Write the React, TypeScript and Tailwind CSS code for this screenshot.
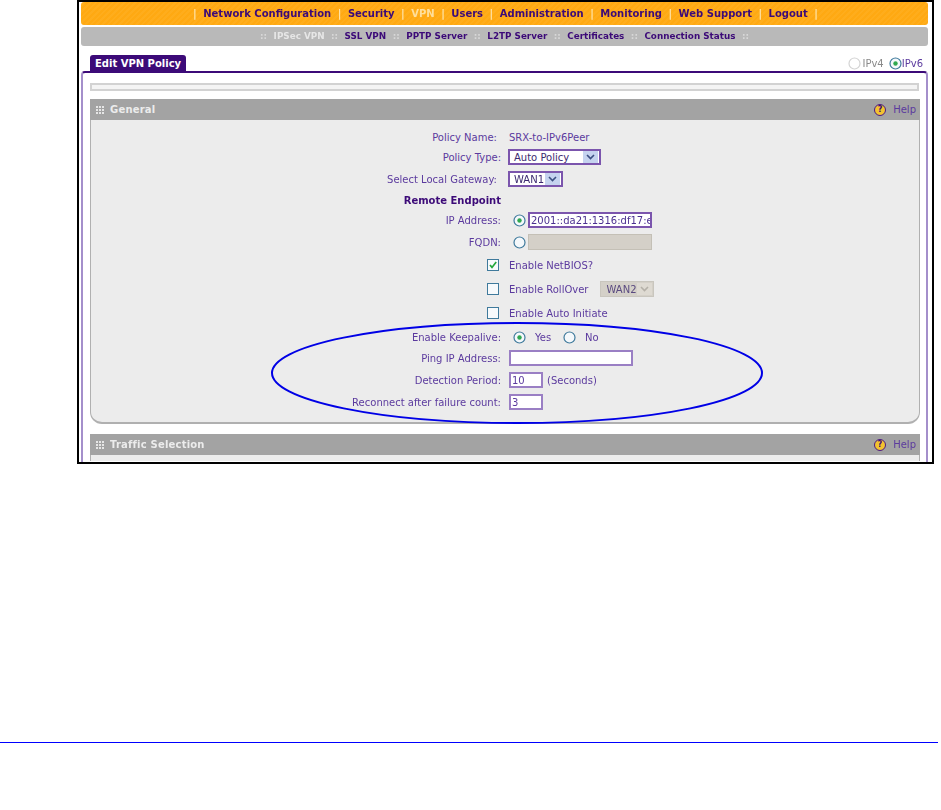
const font = '[font-family:"DejaVu_Sans",sans-serif]'

const mainNav = [
  'Network Configuration',
  'Security',
  'VPN',
  'Users',
  'Administration',
  'Monitoring',
  'Web Support',
  'Logout',
]

const subNav = ['IPSec VPN', 'SSL VPN', 'PPTP Server', 'L2TP Server', 'Certificates', 'Connection Status']

function Radio({ on = false, faded = false }: { on?: boolean; faded?: boolean }) {
  return (
    <svg width="13" height="13" viewBox="0 0 13 13" className="shrink-0">
      <circle cx="6.5" cy="6.5" r="5.5" fill={faded ? '#fff' : '#f4f8fb'} stroke={faded ? '#d4d4d4' : '#3f7a9c'} strokeWidth="1.2" />
      {on && <circle cx="6.5" cy="6.5" r="2.2" fill="#2fa84f" />}
    </svg>
  )
}

function Check({ on = false }: { on?: boolean }) {
  return (
    <svg width="12" height="12" viewBox="0 0 12 12" className="shrink-0">
      <rect x="0.5" y="0.5" width="11" height="11" fill="#f7fafc" stroke="#3f7a9c" />
      {on && <path d="M3 6l2 2.4L9.2 3" fill="none" stroke="#22a63a" strokeWidth="1.7" />}
    </svg>
  )
}

function Caret({ off = false }: { off?: boolean }) {
  return (
    <span className={`flex w-[15px] h-[12px] items-center justify-center ${off ? 'bg-[#dedad2]' : 'bg-[#c5d3ef]'}`}>
      <svg width="9" height="6" viewBox="0 0 9 6">
        <path d="M1 1l3.5 3.5L8 1" fill="none" stroke={off ? '#b4b0a8' : '#3b4f82'} strokeWidth="1.6" />
      </svg>
    </span>
  )
}

function Help() {
  return (
    <div className="flex items-center gap-[7px]">
      <span className="flex w-[12px] h-[12px] items-center justify-center rounded-full bg-[#f2c230] border border-[#4a1a86] text-[8px] font-bold leading-none text-[#3c0a78]">
        ?
      </span>
      <span className="text-[10px] text-[#5b3a9e]">Help</span>
    </div>
  )
}

function SectionHead({ title }: { title: string }) {
  return (
    <div className="flex h-[21px] items-center justify-between bg-[#a3a3a3] pl-[6px] pr-[4px]">
      <div className="flex items-center gap-[6px]">
        <span className="grid grid-cols-3 gap-[1px]">
          {Array.from({ length: 9 }).map((_, i) => (
            <span key={i} className="w-[2px] h-[2px] bg-[#e6e6e6]" />
          ))}
        </span>
        <span className="text-[10px] font-bold tracking-[0.2px] text-[#ececec]">{title}</span>
      </div>
      <Help />
    </div>
  )
}

function Row({ h, label, shift, bold, children }: { h: string; label?: React.ReactNode; shift?: boolean; bold?: boolean; children?: React.ReactNode }) {
  return (
    <div className={`flex items-center ${h}`}>
      <div className={`w-[410px] shrink-0 text-right whitespace-nowrap ${shift ? 'pr-[4px]' : ''} ${bold ? 'font-bold text-[#3c0a78]' : ''}`}>
        {label}
      </div>
      <div className="flex items-center pl-[7px]">{children}</div>
    </div>
  )
}

function CheckRow({ h, on, text, children }: { h: string; on?: boolean; text: string; children?: React.ReactNode }) {
  return (
    <div className={`flex items-center ${h}`}>
      <div className="flex w-[408px] shrink-0 justify-end">
        <Check on={on} />
      </div>
      <div className="flex items-center pl-[10px] whitespace-nowrap">
        {text}
        {children}
      </div>
    </div>
  )
}

export default function App() {
  return (
    <div className={`relative min-h-[810px] w-[941px] bg-white text-[10px] text-[#5b3a9e] ${font}`}>
      <div className="ml-[77px] flex h-[464px] w-[857px] flex-col overflow-hidden border-2 border-black pl-[2px] pr-[4px]">
        <nav className="flex h-[23px] shrink-0 items-center justify-center gap-[6.5px] rounded-[3px] bg-[repeating-linear-gradient(135deg,#ffa912,#ffa912_2px,#ffad1c_2px,#ffad1c_4px)] pl-[2px] text-[10px] font-bold text-[#3c0a78] blur-[0.3px]">
          <span className="text-[#ffe3a8]">|</span>
          {mainNav.map((item) => (
            <div key={item} className="flex items-center gap-[6.5px]">
              <span className={item === 'VPN' ? 'text-[#ffdf9c]' : ''}>{item}</span>
              <span className="text-[#ffe3a8]">|</span>
            </div>
          ))}
        </nav>

        <nav className="mt-[2px] flex h-[19px] shrink-0 items-center justify-center gap-[6.5px] rounded-[3px] bg-[#b9b9b9] text-[8.8px] font-bold text-[#3c0a78] blur-[0.3px]">
          <span className="text-[#d8d8d8]">::</span>
          {subNav.map((item) => (
            <div key={item} className="flex items-center gap-[6.5px]">
              <span className={item === 'IPSec VPN' ? 'text-[#e6e6e6]' : ''}>{item}</span>
              <span className="text-[#d8d8d8]">::</span>
            </div>
          ))}
        </nav>

        <div className="mt-[9px] flex h-[16px] shrink-0 items-end justify-between pl-[9px] pr-[5px] blur-[0.3px]">
          <div className="flex h-[16px] w-[96px] items-center rounded-t-[3px] bg-[#3c0a78] pl-[5px] text-[10px] font-bold text-white">
            Edit VPN Policy
          </div>
          <div className="flex h-[16px] items-center text-[10px]">
            <Radio faded />
            <span className="ml-[1px] mr-[5px] text-[#8a8a8a]">IPv4</span>
            <Radio on />
            <span>IPv6</span>
          </div>
        </div>

        <div className="flex min-h-0 flex-1 flex-col rounded-t-[4px] border-x-2 border-t-2 border-x-[#a48fcb] border-t-[#3c0a78] pl-[7px] pr-[6px] pt-[10px] blur-[0.3px]">
          <div className="mr-[1px] h-[8px] shrink-0 border-2 border-[#d2d2d2] bg-[#f4f4f4]" />

          <div className="mt-[8px] shrink-0">
            <SectionHead title="General" />
            <div className="h-[304px] rounded-b-[12px] border-x border-b-2 border-[#b0b0b0] bg-[#ececec] pt-[7px]">
              <Row h="h-[20px]" label="Policy Name:" shift>
                <span className="pl-[1px]">SRX-to-IPv6Peer</span>
              </Row>
              <Row h="h-[20px]" label="Policy Type:">
                <div className="flex h-[16px] w-[93px] items-center justify-between border-2 border-[#7b55ad] bg-white pl-[4px] pr-[1px] text-[#3c2a70]">
                  Auto Policy
                  <Caret />
                </div>
              </Row>
              <Row h="h-[24px]" label="Select Local Gateway:" shift>
                <div className="flex h-[16px] w-[55px] items-center justify-between border-2 border-[#7b55ad] bg-white pl-[4px] pr-[1px] text-[#3c2a70]">
                  WAN1
                  <Caret />
                </div>
              </Row>
              <Row h="h-[18px]" label="Remote Endpoint" bold />
              <Row h="h-[22px]" label="IP Address:">
                <div className="ml-[5px] flex items-center gap-[2px]">
                  <Radio on />
                  <div className="flex h-[16px] w-[124px] items-center overflow-hidden whitespace-nowrap border-2 border-[#7b55ad] bg-white pl-[1px] text-[#4a2f90]">
                    2001::da21:1316:df17:e
                  </div>
                </div>
              </Row>
              <Row h="h-[22px]" label="FQDN:">
                <div className="ml-[5px] flex items-center gap-[2px]">
                  <Radio />
                  <div className="h-[16px] w-[124px] border border-[#c4c0b6] bg-[#d4d0c8]" />
                </div>
              </Row>
              <CheckRow h="h-[24px]" on text="Enable NetBIOS?" />
              <CheckRow h="h-[24px]" text="Enable RollOver">
                <div className="ml-[12px] flex h-[16px] w-[54px] items-center justify-between border border-[#c9c6be] bg-[#d4d0c8] pl-[5px] pr-[1px] text-[#5a4a80]">
                  WAN2
                  <Caret off />
                </div>
              </CheckRow>
              <CheckRow h="h-[24px]" text="Enable Auto Initiate" />
              <Row h="h-[24px]" label="Enable Keepalive:">
                <div className="ml-[5px] flex items-center">
                  <Radio on />
                  <span className="ml-[9px] w-[28px]">Yes</span>
                  <Radio />
                  <span className="ml-[9px]">No</span>
                </div>
              </Row>
              <Row h="h-[18px]" label="Ping IP Address:">
                <div className="ml-[1px] h-[16px] w-[124px] border-2 border-[#9a7fc4] bg-white" />
              </Row>
              <Row h="h-[26px]" label="Detection Period:">
                <div className="ml-[1px] flex items-center">
                  <div className="flex h-[16px] w-[34px] items-center border-2 border-[#9a7fc4] bg-white pl-[1px]">10</div>
                  <span className="ml-[4px]">(Seconds)</span>
                </div>
              </Row>
              <Row h="h-[18px]" label="Reconnect after failure count:">
                <div className="ml-[1px] flex h-[16px] w-[34px] items-center border-2 border-[#9a7fc4] bg-white pl-[1px]">3</div>
              </Row>
            </div>
          </div>

          <div className="mt-[10px] shrink-0">
            <SectionHead title="Traffic Selection" />
            <div className="h-[6px] border-x border-[#b0b0b0] bg-[#ececec]" />
          </div>
        </div>
      </div>

      <svg width="492" height="102" viewBox="0 0 492 102" className="absolute left-[271px] top-[322px]">
        <ellipse cx="246" cy="51" rx="245" ry="50" fill="none" stroke="#0000e6" strokeWidth="2" />
      </svg>

      <div className="mt-[278px] h-px w-[938px] bg-[#0000ff]" />
    </div>
  )
}
